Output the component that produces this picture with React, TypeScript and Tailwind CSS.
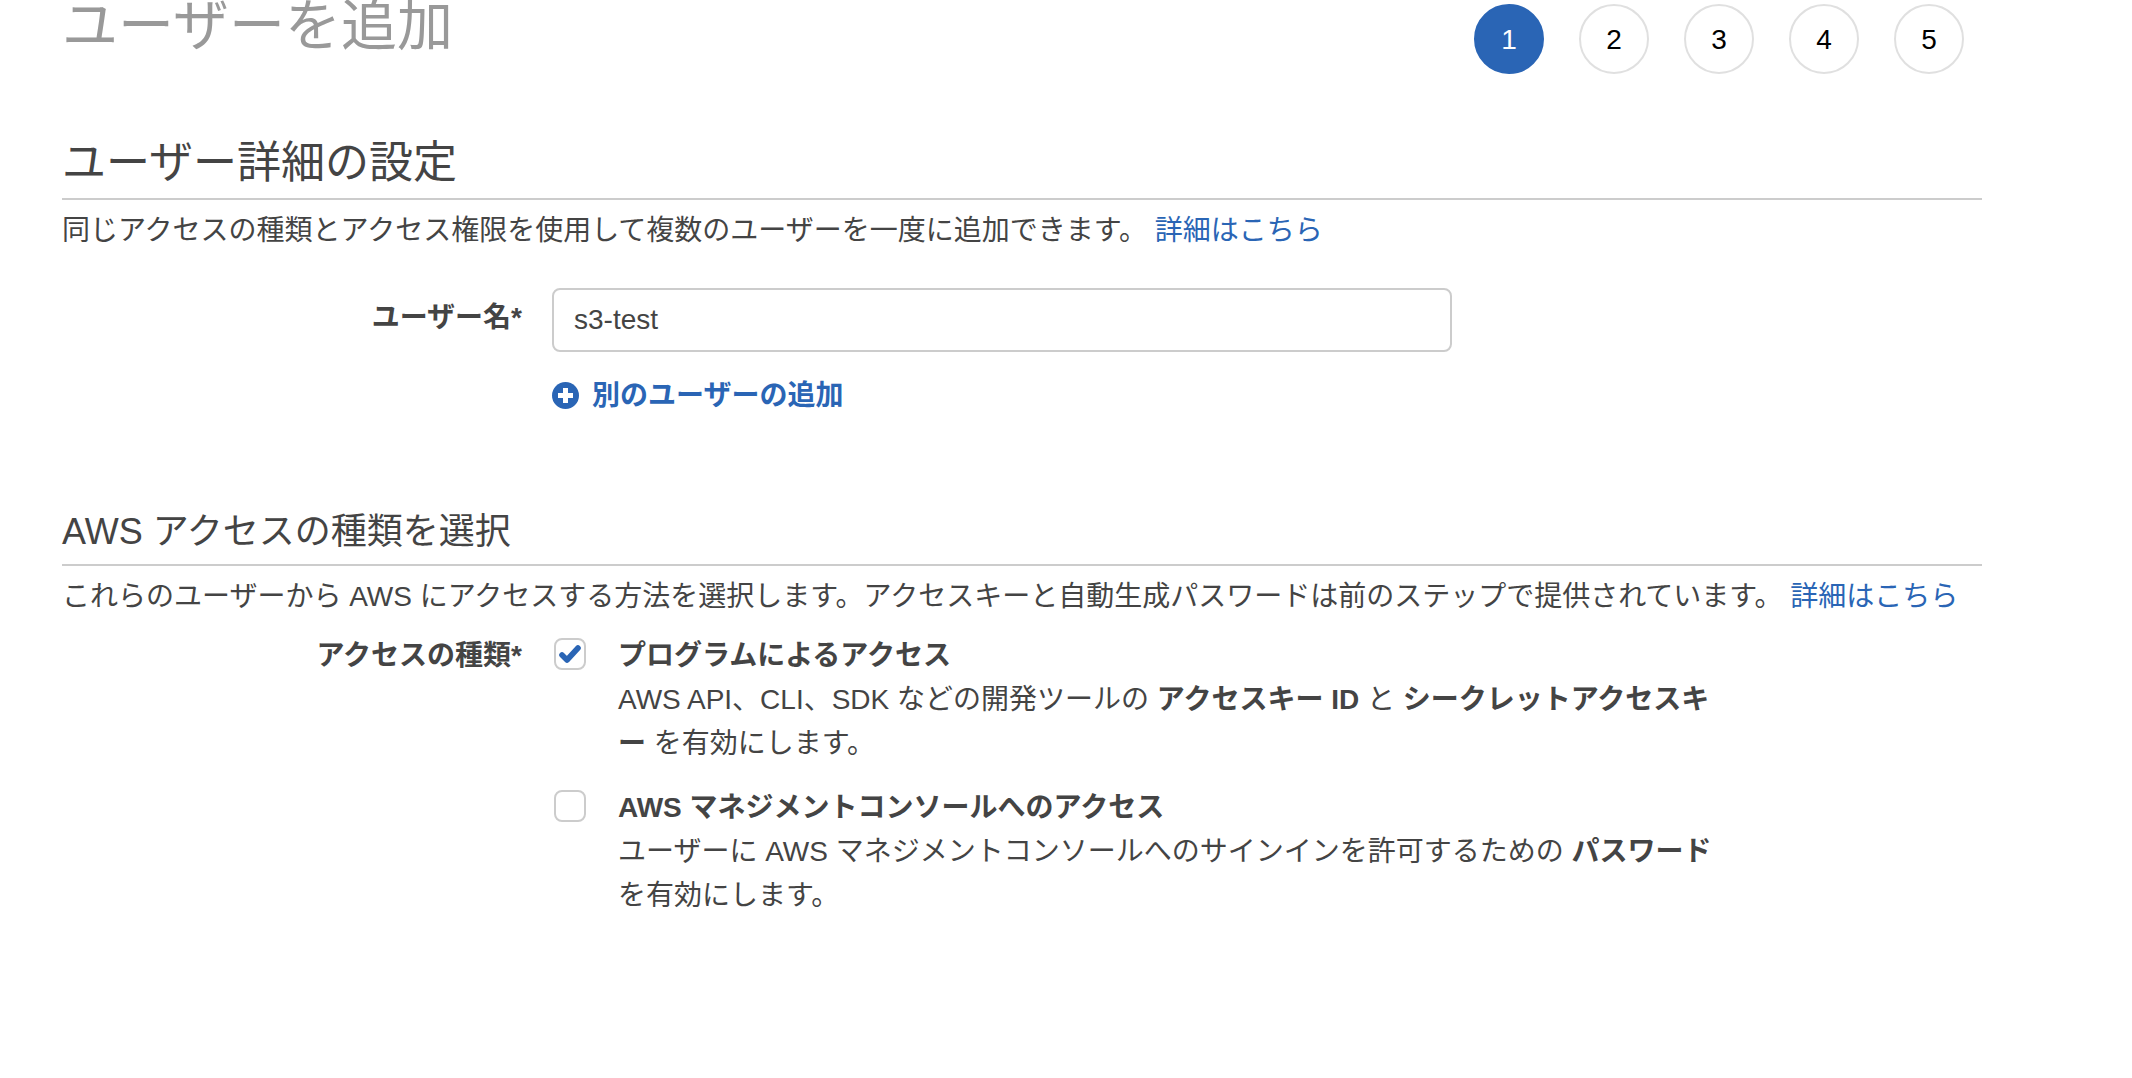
import { ReactNode, useState } from "react";

const steps = [1, 2, 3, 4, 5];

const StepList = ({ current }: { current: number }) => {
  return (
    <ol className="flex gap-[35px] mt-1 mr-[18px]">
      {steps.map((step) => (
        <li
          key={step}
          aria-current={step === current ? "step" : undefined}
          className={`flex items-center justify-center size-[70px] rounded-full border-2 pt-0.5 ${
            step === current ? "bg-[#2a65b5] border-[#2a65b5] text-white" : "bg-white border-[#e0e0e0] text-black"
          }`}
        >
          {step}
        </li>
      ))}
    </ol>
  );
};

const PlusCircle = () => (
  <svg viewBox="0 0 28 28" className="size-7" aria-hidden="true">
    <circle cx="13.5" cy="13.5" r="13.5" fill="currentColor" />
    <path d="M13.5 8.5v10M8.5 13.5h10" stroke="#fff" strokeWidth="5" strokeLinecap="square" />
  </svg>
);

const Check = () => (
  <svg
    viewBox="0 0 32 32"
    className="hidden peer-checked:block absolute inset-0 size-8 text-[#2a65b5] pointer-events-none"
    aria-hidden="true"
  >
    <path d="M8 17l5 5L24 10" fill="none" stroke="currentColor" strokeWidth="5.6" strokeLinecap="round" strokeLinejoin="round" />
  </svg>
);

const AccessOption = ({
  id,
  title,
  checked,
  onChange,
  children,
}: {
  id: string;
  title: string;
  checked: boolean;
  onChange: (checked: boolean) => void;
  children: ReactNode;
}) => {
  return (
    <div className="flex gap-8">
      <span className="relative shrink-0 size-8 mt-1">
        <input
          id={id}
          type="checkbox"
          checked={checked}
          onChange={(e) => onChange(e.target.checked)}
          className="peer block appearance-none size-8 rounded-lg border-2 border-[#ccc] bg-white"
        />
        <Check />
      </span>
      <div className="flex-1">
        <label htmlFor={id} className="block font-bold">
          {title}
        </label>
        <p className="[line-break:loose]">{children}</p>
      </div>
    </div>
  );
};

const App = () => {
  const [userName, setUserName] = useState("s3-test");
  const [programmatic, setProgrammatic] = useState(true);
  const [consoleAccess, setConsoleAccess] = useState(false);

  return (
    <main
      lang="ja"
      className="min-h-screen overflow-hidden bg-white pl-[62px] pr-[150px] text-[28px] leading-[44px] text-[#444] font-['Liberation_Sans','Noto_Sans_CJK_JP',sans-serif]"
    >
      <header className="flex items-start justify-between">
        <h1 className="text-[56px] leading-[52px] text-[#999]">ユーザーを追加</h1>
        <StepList current={1} />
      </header>

      <section className="mt-[59px]">
        <h2 className="pb-[5px] border-b-2 border-[#ccc] text-[44px] leading-[60px]">ユーザー詳細の設定</h2>
        <p className="pt-[9px]">
          同じアクセスの種類とアクセス権限を使用して複数のユーザーを一度に追加できます。{" "}
          <a href="#users" className="text-[#2a65b5]">
            詳細はこちら
          </a>
        </p>
        <div className="flex gap-[30px] mt-[35px]">
          <label htmlFor="user-name" className="w-[460px] text-right font-bold leading-[60px]">
            ユーザー名*
          </label>
          <div className="flex-1 max-w-[900px]">
            <input
              id="user-name"
              type="text"
              value={userName}
              onChange={(e) => setUserName(e.target.value)}
              className="block w-full h-16 px-5 rounded-lg border-2 border-[#ccc] bg-white"
            />
            <button type="button" className="flex items-center gap-3 mt-[22px] font-bold text-[#2a65b5]">
              <PlusCircle />
              別のユーザーの追加
            </button>
          </div>
        </div>
      </section>

      <section className="mt-[89px]">
        <h2 className="pb-[7px] border-b-2 border-[#ccc] text-4xl leading-[50px]">AWS アクセスの種類を選択</h2>
        <p className="pt-[9px]">
          これらのユーザーから AWS にアクセスする方法を選択します。アクセスキーと自動生成パスワードは前のステップで提供されています。{" "}
          <a href="#access" className="text-[#2a65b5]">
            詳細はこちら
          </a>
        </p>
        <div role="group" aria-labelledby="access-type" className="flex gap-8 mt-[15px]">
          <span id="access-type" className="w-[460px] text-right font-bold">
            アクセスの種類*
          </span>
          <div className="flex flex-1 flex-col gap-5 max-w-[1172px]">
            <AccessOption id="programmatic" title="プログラムによるアクセス" checked={programmatic} onChange={setProgrammatic}>
              AWS API、CLI、SDK などの開発ツールの <b>アクセスキー ID</b> と <b>シークレットアクセスキー</b> を有効にします。
            </AccessOption>
            <AccessOption id="console" title="AWS マネジメントコンソールへのアクセス" checked={consoleAccess} onChange={setConsoleAccess}>
              ユーザーに AWS マネジメントコンソールへのサインインを許可するための <b>パスワード</b> を有効にします。
            </AccessOption>
          </div>
        </div>
      </section>
    </main>
  );
};

export default App;
